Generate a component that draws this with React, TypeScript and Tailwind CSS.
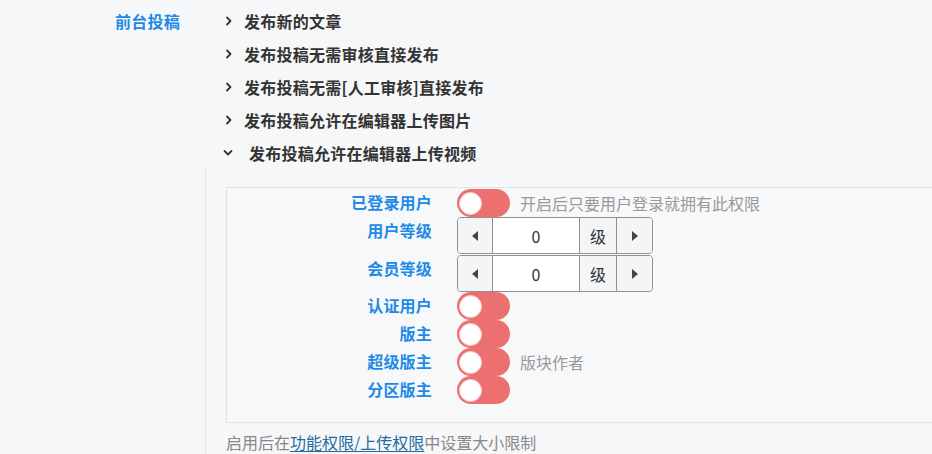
import React from "react";

const font = { fontFamily: '"Noto Sans CJK SC", "Noto Sans", sans-serif' };

function ChevronRight() {
  return (
    <svg width="8" height="10" viewBox="0 0 8 10" className="shrink-0">
      <path d="M2 1.5 L5.5 5 L2 8.5" fill="none" stroke="#333" strokeWidth="1.8" strokeLinecap="round" strokeLinejoin="round" />
    </svg>
  );
}

function ChevronDown() {
  return (
    <svg width="10" height="8" viewBox="0 0 10 8" className="shrink-0">
      <path d="M1.5 2 L5 5.5 L8.5 2" fill="none" stroke="#333" strokeWidth="1.8" strokeLinecap="round" strokeLinejoin="round" />
    </svg>
  );
}

function Toggle() {
  return (
    <div className="w-[53px] h-[28px] rounded-full bg-[#ed7070] flex items-center pl-[2px] shrink-0">
      <div className="w-[23px] h-[23px] rounded-full bg-white border border-[#f6c9c9]" />
    </div>
  );
}

function Spinner() {
  return (
    <div className="flex h-[37px] w-[196px] border border-[#909090] rounded-[4px] overflow-hidden text-[16px] text-[#333]">
      <div className="w-[35px] bg-[#f4f5f6] flex items-center justify-center border-r border-[#909090]">
        <svg width="6" height="10" viewBox="0 0 6 10">
          <path d="M6 0 L0 5 L6 10 Z" fill="#444" />
        </svg>
      </div>
      <div className="w-[87px] bg-white flex items-center justify-center border-r border-[#909090]">0</div>
      <div className="w-[37px] bg-[#f4f5f6] flex items-center justify-center border-r border-[#909090]">级</div>
      <div className="flex-1 bg-[#f4f5f6] flex items-center justify-center">
        <svg width="6" height="10" viewBox="0 0 6 10">
          <path d="M0 0 L6 5 L0 10 Z" fill="#444" />
        </svg>
      </div>
    </div>
  );
}

function Row({ label, children }: { label: string; children: React.ReactNode }) {
  return (
    <div className="flex items-start">
      <div className="w-[205px] shrink-0 text-right font-bold text-[16px] leading-[26px] tracking-[0.2px] text-[#208ae6]">{label}</div>
      <div className="ml-[25px] flex items-center">{children}</div>
    </div>
  );
}

const items = ["发布新的文章", "发布投稿无需审核直接发布", "发布投稿无需[人工审核]直接发布", "发布投稿允许在编辑器上传图片"];

export default function App() {
  return (
    <div className="w-[932px] h-[454px] bg-[#f6f7f9] overflow-hidden flex" style={font}>
      <div className="w-[222px] shrink-0 pl-[115px] pt-[9px]">
        <div className="text-[16px] font-bold leading-[24px] tracking-[0.25px] text-[#208ae6]">前台投稿</div>
      </div>
      <div className="flex-1 flex flex-col">
        <div className="pt-[4px]">
          {items.map((t) => (
            <div key={t} className="h-[33px] flex items-center">
              <div className="w-[22px] pl-[3px] flex items-center">
                <ChevronRight />
              </div>
              <span className="text-[16px] font-bold tracking-[0.25px] text-[#333]">{t}</span>
            </div>
          ))}
          <div className="h-[33px] flex items-center">
            <div className="w-[27px] pl-[1px] flex items-center">
              <ChevronDown />
            </div>
            <span className="text-[16px] font-bold tracking-[0.25px] text-[#333]">发布投稿允许在编辑器上传视频</span>
          </div>
        </div>
        <div className="-ml-[17px] flex-1 border-l border-[#e3e5e8] pl-[20px] pt-[18px]">
          <div className="border border-r-0 border-[#e0e2e5] bg-[#f7f8fa] pt-[1px] pb-[18px]">
            <Row label="已登录用户">
              <Toggle />
              <span className="ml-[10px] text-[16px] text-[#999]">开启后只要用户登录就拥有此权限</span>
            </Row>
            <Row label="用户等级">
              <Spinner />
            </Row>
            <div className="h-[1px]" />
            <Row label="会员等级">
              <Spinner />
            </Row>
            <Row label="认证用户">
              <Toggle />
            </Row>
            <Row label="版主">
              <Toggle />
            </Row>
            <Row label="超级版主">
              <Toggle />
              <span className="ml-[10px] text-[16px] text-[#999]">版块作者</span>
            </Row>
            <Row label="分区版主">
              <Toggle />
            </Row>
          </div>
          <div className="pt-[7px] text-[16px] text-[#888]">
            启用后在<span className="text-[#1f6c9e] underline underline-offset-2">功能权限/上传权限</span>中设置大小限制
          </div>
        </div>
      </div>
    </div>
  );
}
